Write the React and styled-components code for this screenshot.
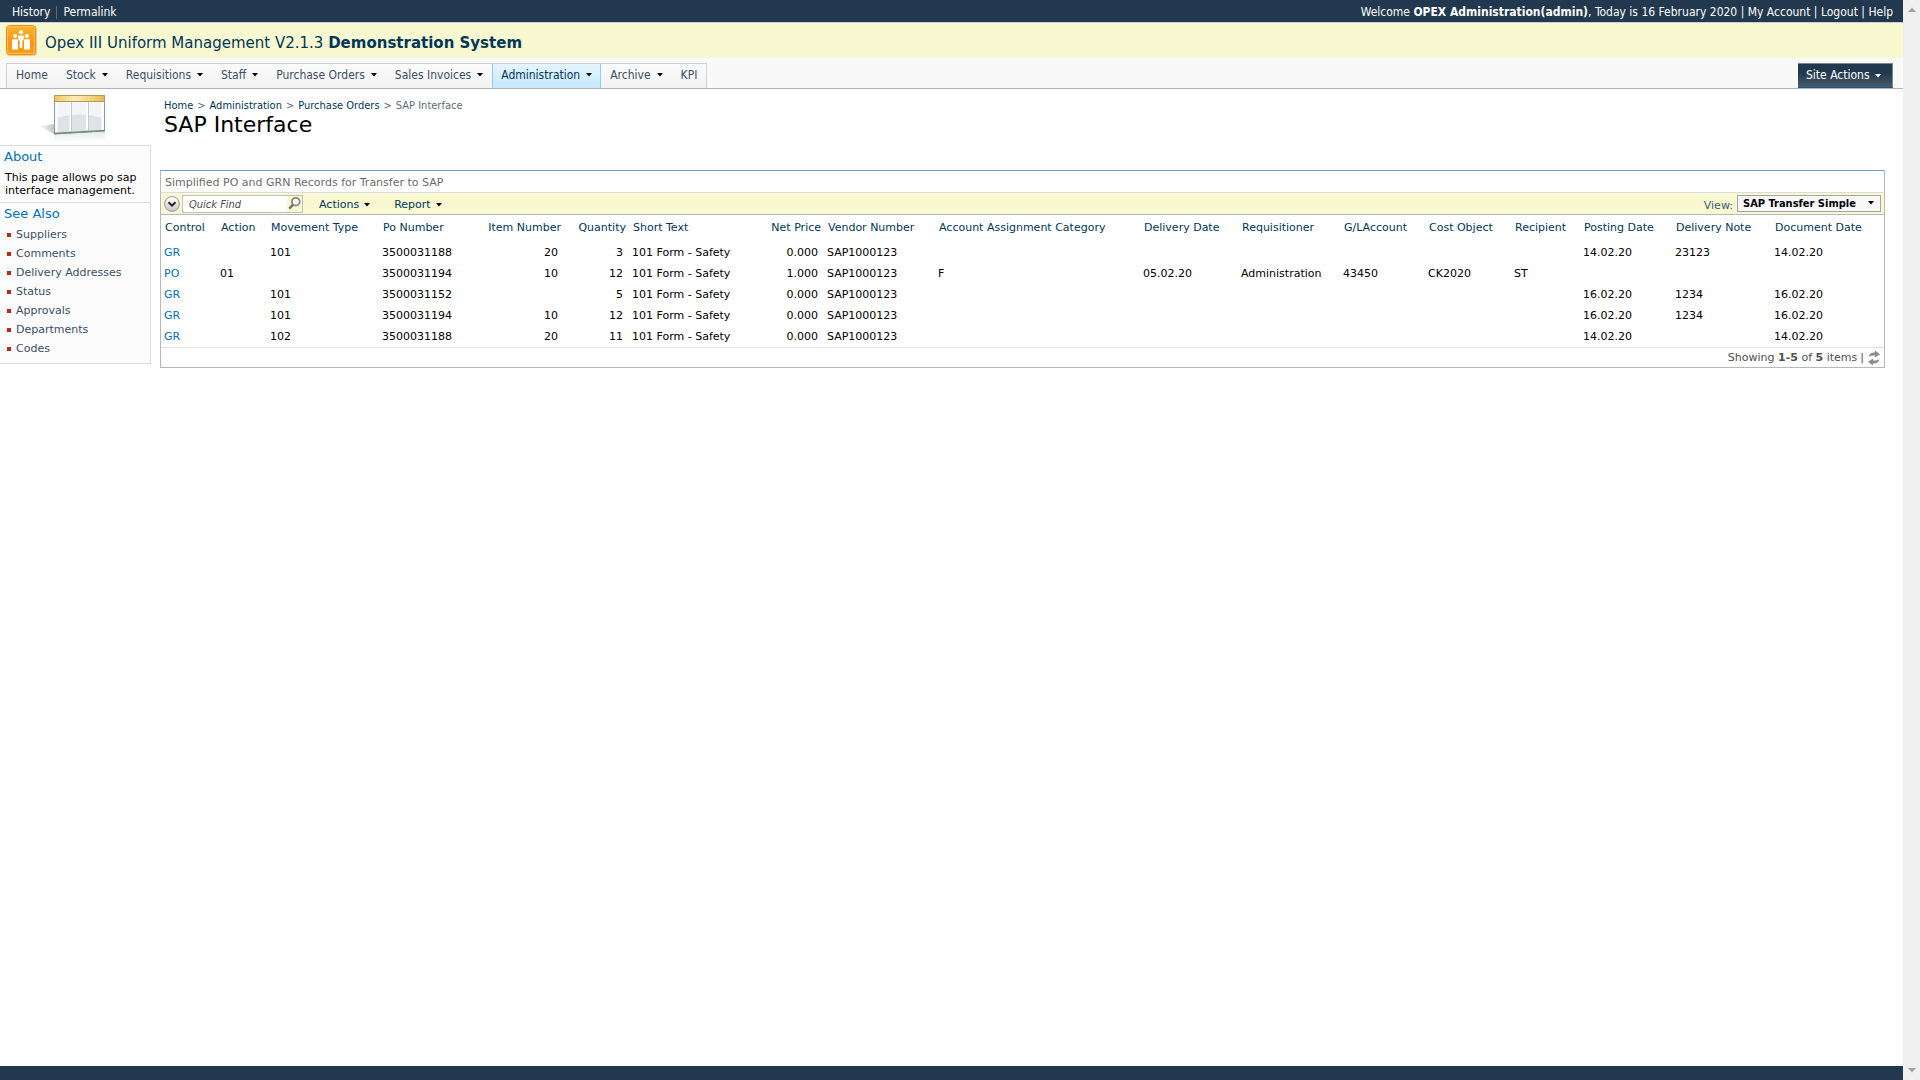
import React from 'react'
import styled, { createGlobalStyle, css } from 'styled-components';

const verdana = `Verdana, "DejaVu Sans", sans-serif`
const tahoma = `Tahoma, "DejaVu Sans Condensed", "DejaVu Sans", sans-serif`

const GlobalStyle = createGlobalStyle`
* {
  box-sizing: border-box;
}
body {
  margin: 0;
  background: #fff;
  color: #000;
  font-family: ${verdana};
  font-size: 11px;
  line-height: 13px;
}
a {
  color: inherit;
  text-decoration: none;
}
button, input, select {
  font: inherit;
  color: inherit;
}
`

const Shell = styled.div`
  display: flex;
  min-height: 100vh;
`

const Page = styled.div`
  flex: 1;
  min-width: 0;
  display: flex;
  flex-direction: column;
`

const ScrollTrack = styled.div`
  width: 17px;
  padding: 7px 0;
  display: flex;
  flex-direction: column;
  align-items: center;
  justify-content: space-between;
  background: #f0f0f0;
  color: #a3a3a3;
`

const TopBar = styled.header`
  height: 23px;
  padding: 2px 10px 0 12px;
  display: flex;
  align-items: center;
  justify-content: space-between;
  background: #22384e;
  border-bottom: 1px solid #c3d0dc;
  color: #fff;
  font-family: ${tahoma};
  font-size: 12px;
  white-space: nowrap;
`

const TopLinks = styled.nav`
  display: flex;
  gap: 6px;
`

const Divider = styled.span`
  width: 1px;
  background: #59697a;
`

const Banner = styled.div`
  height: 35px;
  padding-left: 6px;
  display: flex;
  align-items: center;
  gap: 8px;
  background: #f9f9d1;
`

const SiteTitle = styled.div`
  padding-top: 4px;
  color: #003759;
  font-size: 15px;
  line-height: 20px;
  white-space: nowrap;
`

const MenuBar = styled.div`
  height: 31px;
  padding: 5px 10px 0 6px;
  display: flex;
  justify-content: space-between;
  background: #f9f9f9;
  border-bottom: 1px solid #b5b5b5;
  font-family: ${tahoma};
  font-size: 12px;
`

const Tabs = styled.nav`
  display: flex;
  border: 1px solid #d0d0d0;
  border-bottom: 0;
  background: linear-gradient(#fbfbfb, #f2f2f2);
`

const tabStyle = css`
  display: flex;
  align-items: center;
  gap: 6px;
  padding: 0 8px 2px;
  border: solid transparent;
  border-width: 0 1px;
  background: none;
  color: #3b4f65;
  white-space: nowrap;

  svg {
    color: #000;
  }
`

const TabLink = styled.a`
  ${tabStyle}
`

const TabButton = styled.button`
  ${tabStyle}
  ${({ $active }) => $active && css`
    border-color: #91cdf2;
    background: linear-gradient(#e6f5ff, #c5e8ff);
    color: #003759;
  `}
`

const SiteActions = styled.button`
  width: 95px;
  display: flex;
  align-items: center;
  gap: 5px;
  padding: 0 0 0 8px;
  border: 1px solid #7b8792;
  border-bottom-color: #0f5a96;
  border-left: 0;
  background: linear-gradient(#22384e 40%, #4b5b6b);
  color: #fff;
  white-space: nowrap;
`

const Body = styled.div`
  flex: 1;
  display: flex;
  align-items: flex-start;
`

const Sidebar = styled.aside`
  width: 151px;
`

const PageIcon = styled.svg`
  display: block;
  margin: 4px 0 2px 38px;
`

const SidePanel = styled.div`
  border: 1px solid #dbddde;
  border-left: 0;
  background: #fcfcfc;
`

const SideBox = styled.section`
  padding: 3px 4px 5px;

  & + & {
    border-top: 1px solid #dbddde;
  }
`

const SideTitle = styled.h2`
  margin: 0;
  color: #0072bc;
  font-size: 13px;
  font-weight: normal;
  line-height: 16px;
`

const SideText = styled.p`
  margin: 6px 0 0 1px;
  white-space: nowrap;
`

const SideList = styled.ul`
  margin: 3px 0 0;
  padding: 0;
  list-style: none;
`

const SideItem = styled.li`
  display: flex;
  align-items: center;
  gap: 5px;
  height: 19px;
  padding-left: 3px;
  color: #3b4f65;

  &::before {
    content: '';
    width: 4px;
    height: 4px;
    background: #c4260d;
  }
`

const Main = styled.main`
  flex: 1;
  min-width: 0;
  padding: 10px 18px 0 9px;
`

const Crumbs = styled.nav`
  display: flex;
  gap: 4px;
  padding-left: 4px;
  color: #003759;
  font-family: ${tahoma};
`

const Muted = styled.span`
  color: #5f6b78;
`

const Heading = styled.h1`
  margin: 0 0 32px;
  padding-left: 4px;
  font-size: 22px;
  font-weight: normal;
  line-height: 26px;
`

const Grid = styled.section`
  border: 1px solid #b6b8bb;
  border-top-color: #6c9cdb;
`

const GridTitle = styled.div`
  padding: 5px 4px 3px;
  color: #6b6b6b;
`

const Toolbar = styled.div`
  height: 23px;
  padding: 0 3px;
  display: flex;
  align-items: center;
  border: solid;
  border-width: 1px 0;
  border-color: #dcdcdc transparent #b6b8bb;
  background: #f9f9d1;
  color: #003759;
`

const RoundButton = styled.button`
  display: flex;
  padding: 0;
  border: 0;
  background: none;
`

const SearchBox = styled.form`
  width: 121px;
  height: 18px;
  margin: 0 8px 0 2px;
  display: flex;
  border: 1px solid #bfc1c4;
  background: #fff;
`

const SearchInput = styled.input`
  flex: 1;
  min-width: 0;
  padding: 1px 6px 0;
  border: 0;
  outline: 0;
  background: none;
  font-family: ${tahoma};
  font-style: italic;

  &::placeholder {
    color: #4a4a4a;
    opacity: 1;
  }
`

const SearchButton = styled.button`
  display: flex;
  padding: 0 1px;
  border: 0;
  background: #f9f9d1;
`

const ToolButton = styled.button`
  display: flex;
  align-items: center;
  gap: 5px;
  margin-right: 8px;
  padding: 2px 8px 0;
  border: 0;
  background: none;

  svg {
    color: #000;
  }
`

const ViewPicker = styled.label`
  margin-left: auto;
  display: flex;
  align-items: flex-end;
  gap: 4px;
  color: #3b5a7c;
`

const SelectWrap = styled.span`
  position: relative;
  display: flex;
  color: #000;

  svg {
    position: absolute;
    right: 7px;
    top: 6px;
    pointer-events: none;
  }
`

const Select = styled.select`
  appearance: none;
  width: 144px;
  height: 17px;
  padding: 0 16px 0 5px;
  border: 1px solid #a5a7aa;
  border-radius: 0;
  background: #f8f8f8;
  font-family: ${tahoma};
  font-weight: bold;
`

const Table = styled.table`
  width: 100%;
  table-layout: fixed;
  border-collapse: collapse;
  white-space: nowrap;
`

const Th = styled.th`
  height: 27px;
  padding: 0 ${({ $right }) => ($right ? 3 : 4)}px 2px;
  color: #003759;
  font-weight: normal;
  text-align: ${({ $right }) => ($right ? 'right' : 'left')};
`

const Td = styled.td`
  height: 21px;
  padding: 0 ${({ $right }) => ($right ? 6 : 3)}px;
  text-align: ${({ $right }) => ($right ? 'right' : 'left')};

  a {
    color: #0072bc;
  }
`

const Pager = styled.div`
  height: 20px;
  padding-right: 3px;
  display: flex;
  align-items: center;
  justify-content: flex-end;
  gap: 3px;
  border-top: 1px solid #e3e3e3;
  color: #4f4f4f;
`

const Footer = styled.footer`
  height: 14px;
  background: #22384e;
`

const Caret = () => (
  <svg width="6" height="4" viewBox="0 0 6 4" aria-hidden="true">
    <path d="M0 0h6L3 3.6z" fill="currentColor" />
  </svg>
)

const ScrollArrow = ({ down }) => (
  <svg width="8" height="5" viewBox="0 0 8 5" aria-hidden="true">
    <path d={down ? 'M0 0h8L4 4.6z' : 'M0 5h8L4 .4z'} fill="currentColor" />
  </svg>
)

const Logo = () => (
  <svg width="31" height="31" viewBox="0 0 31 31" aria-hidden="true">
    <defs>
      <linearGradient id="logo" x1="0" y1="0" x2="0" y2="1">
        <stop offset="0" stopColor="#ffb52e" />
        <stop offset=".6" stopColor="#fb9410" />
        <stop offset="1" stopColor="#fba01c" />
      </linearGradient>
    </defs>
    <rect x="1" y="1" width="30" height="30" rx="3" fill="#d9d2b0" />
    <rect x=".5" y=".5" width="29" height="29" rx="3" fill="url(#logo)" stroke="#f08a10" />
    <rect x="1.5" y="1.5" width="27" height="27" rx="2" fill="none" stroke="#ffc35a" />
    <g fill="#fff">
      <circle cx="15" cy="7.2" r="2.1" />
      <circle cx="9.200" cy="11" r="2.1" />
      <circle cx="20.800" cy="11" r="2.1" />
      <path d="M12.2 10.4h5.6v4.2l-1.400 1.400-.2 7h-2.400l-.2-7-1.400-1.400z" />
      <path d="M6 15.2q0-1 1-1h4q1 0 1 1v9.4H6zM18 15.2q0-1 1-1h4q1 0 1 1v9.4h-6z" />
    </g>
  </svg>
)

const SheetIcon = () => (
  <PageIcon width="70" height="50" viewBox="0 0 70 50" aria-hidden="true">
    <defs>
      <linearGradient id="gold" x1="0" y1="0" x2="1" y2="0">
        <stop offset="0" stopColor="#efc55e" />
        <stop offset=".4" stopColor="#fdeeb9" />
        <stop offset="1" stopColor="#e9bc52" />
      </linearGradient>
      <linearGradient id="shade" x1="0" y1="0" x2="1" y2="0">
        <stop offset="0" stopColor="#fff" />
        <stop offset="1" stopColor="#c4c4c4" />
      </linearGradient>
      <linearGradient id="fade" x1="0" y1="0" x2="0" y2="1">
        <stop offset="0" stopColor="#c9d2cf" />
        <stop offset="1" stopColor="#fff" />
      </linearGradient>
    </defs>
    <path d="M1 33l15-2v10z" fill="url(#shade)" />
    <path d="M16 41l51-3v9l-51 2z" fill="url(#fade)" opacity=".5" />
    <path d="M16.500 2.500h50v35.500l-50 3z" fill="#f5f5f7" stroke="#889f97" />
    <path d="M18 25q24-7 47 0v12l-47 3z" fill="#e0e2e7" />
    <path d="M18.500 9v30M32.500 9v29M49 9v28M64.500 9v28" stroke="#fff" strokeWidth="2" />
    <path d="M33.500 9v30M50.500 9v29" stroke="#c4cbca" />
    <path d="M16.500 2.500h50v6h-50z" fill="url(#gold)" stroke="#b59a55" />
    <path d="M16 40.500l51-3" stroke="#6d8c82" strokeWidth="1.400" />
  </PageIcon>
)

const ExpandIcon = () => (
  <svg width="16" height="16" viewBox="0 0 16 16" aria-hidden="true">
    <defs>
      <linearGradient id="round" x1="0" y1="0" x2="0" y2="1">
        <stop offset="0" stopColor="#fff" />
        <stop offset="1" stopColor="#c6c6c6" />
      </linearGradient>
    </defs>
    <circle cx="8" cy="8" r="7.400" fill="url(#round)" stroke="#999" />
    <path d="M4.500 6.200L8 9.700l3.500-3.500" fill="none" stroke="#222" strokeWidth="2" />
  </svg>
)

const SearchIcon = () => (
  <svg width="13" height="15" viewBox="0 0 13 15" aria-hidden="true">
    <circle cx="7.800" cy="5.700" r="3.900" fill="#fff" stroke="#858585" strokeWidth="1.800" />
    <path d="M5 8.700L1.300 12.600" stroke="#757575" strokeWidth="2.600" />
  </svg>
)

const RefreshIcon = () => (
  <svg width="14" height="16" viewBox="0 0 14 16" aria-hidden="true">
    <g fill="#8b8b8b">
      <path d="M1.500 6.800Q2.500 2.400 8 2.600V.400l5 3.800-5 3.400V5.500Q4.200 5 1.500 6.800z" />
      <path d="M12.500 9.200Q11.500 13.600 6 13.400v2.200l-5-3.800 5-3.400v2.100q3.800.500 6.500-1.300z" />
    </g>
  </svg>
)

const tabs = [
  { name: 'Home' },
  { name: 'Stock', menu: true },
  { name: 'Requisitions', menu: true },
  { name: 'Staff', menu: true },
  { name: 'Purchase Orders', menu: true },
  { name: 'Sales Invoices', menu: true },
  { name: 'Administration', menu: true, active: true },
  { name: 'Archive', menu: true },
  { name: 'KPI' },
]

const seeAlso = ['Suppliers', 'Comments', 'Delivery Addresses', 'Status', 'Approvals', 'Departments', 'Codes']

const columns = [
  { key: 'control', label: 'Control', width: 56 },
  { key: 'action', label: 'Action', width: 50 },
  { key: 'movement', label: 'Movement Type', width: 112 },
  { key: 'po', label: 'Po Number', width: 100 },
  { key: 'item', label: 'Item Number', width: 85, right: true },
  { key: 'quantity', label: 'Quantity', width: 65, right: true },
  { key: 'text', label: 'Short Text', width: 130 },
  { key: 'price', label: 'Net Price', width: 65, right: true },
  { key: 'vendor', label: 'Vendor Number', width: 111 },
  { key: 'category', label: 'Account Assignment Category', width: 205 },
  { key: 'delivery', label: 'Delivery Date', width: 98 },
  { key: 'requisitioner', label: 'Requisitioner', width: 102 },
  { key: 'gl', label: 'G/LAccount', width: 85 },
  { key: 'cost', label: 'Cost Object', width: 86 },
  { key: 'recipient', label: 'Recipient', width: 69 },
  { key: 'posting', label: 'Posting Date', width: 92 },
  { key: 'note', label: 'Delivery Note', width: 99 },
  { key: 'document', label: 'Document Date' },
]

const base = { text: '101 Form - Safety', price: '0.000', vendor: 'SAP1000123' }

const records = [
  { ...base, control: 'GR', movement: '101', po: '3500031188', item: '20', quantity: '3', posting: '14.02.20', note: '23123', document: '14.02.20' },
  { ...base, control: 'PO', action: '01', po: '3500031194', item: '10', quantity: '12', price: '1.000', category: 'F', delivery: '05.02.20', requisitioner: 'Administration', gl: '43450', cost: 'CK2020', recipient: 'ST' },
  { ...base, control: 'GR', movement: '101', po: '3500031152', quantity: '5', posting: '16.02.20', note: '1234', document: '16.02.20' },
  { ...base, control: 'GR', movement: '101', po: '3500031194', item: '10', quantity: '12', posting: '16.02.20', note: '1234', document: '16.02.20' },
  { ...base, control: 'GR', movement: '102', po: '3500031188', item: '20', quantity: '11', posting: '14.02.20', document: '14.02.20' },
]

function RecordsTable () {
  return (
    <Table>
      <colgroup>
        {columns.map((c) => <col key={c.key} width={c.width} />)}
      </colgroup>
      <thead>
        <tr>
          {columns.map((c) => <Th key={c.key} scope="col" $right={c.right}>{c.label}</Th>)}
        </tr>
      </thead>
      <tbody>
        {records.map((row, i) => (
          <tr key={i}>
            {columns.map((c) => (
              <Td key={c.key} $right={c.right}>
                {c.key === 'control' ? <a href="#record">{row.control}</a> : row[c.key]}
              </Td>
            ))}
          </tr>
        ))}
      </tbody>
    </Table>
  )
}

function App () {
  return (
    <Shell>
      <GlobalStyle />
      <Page>
        <TopBar>
          <TopLinks>
            <a href="#history">History</a>
            <Divider />
            <a href="#permalink">Permalink</a>
          </TopLinks>
          <div>
            Welcome <b>OPEX Administration(admin)</b>, Today is 16 February 2020 | <a href="#account">My Account</a> | <a href="#logout">Logout</a> | <a href="#help">Help</a>
          </div>
        </TopBar>
        <Banner>
          <Logo />
          <SiteTitle>Opex III Uniform Management V2.1.3 <b>Demonstration System</b></SiteTitle>
        </Banner>
        <MenuBar>
          <Tabs>
            {tabs.map((t) => t.menu
              ? <TabButton key={t.name} type="button" $active={t.active}>{t.name}<Caret /></TabButton>
              : <TabLink key={t.name} href="#tab">{t.name}</TabLink>
            )}
          </Tabs>
          <SiteActions type="button">Site Actions<Caret /></SiteActions>
        </MenuBar>
        <Body>
          <Sidebar>
            <SheetIcon />
            <SidePanel>
              <SideBox>
                <SideTitle>About</SideTitle>
                <SideText>This page allows po sap<br />interface management.</SideText>
              </SideBox>
              <SideBox>
                <SideTitle>See Also</SideTitle>
                <SideList>
                  {seeAlso.map((name) => <SideItem key={name}><a href="#see">{name}</a></SideItem>)}
                </SideList>
              </SideBox>
            </SidePanel>
          </Sidebar>
          <Main>
            <Crumbs>
              <a href="#home">Home</a>
              <Muted>&gt;</Muted>
              <a href="#administration">Administration</a>
              <Muted>&gt;</Muted>
              <a href="#orders">Purchase Orders</a>
              <Muted>&gt;</Muted>
              <Muted>SAP Interface</Muted>
            </Crumbs>
            <Heading>SAP Interface</Heading>
            <Grid>
              <GridTitle>Simplified PO and GRN Records for Transfer to SAP</GridTitle>
              <Toolbar>
                <RoundButton type="button" aria-label="Search options"><ExpandIcon /></RoundButton>
                <SearchBox>
                  <SearchInput type="text" placeholder="Quick Find" aria-label="Quick Find" />
                  <SearchButton type="button" aria-label="Search"><SearchIcon /></SearchButton>
                </SearchBox>
                <ToolButton type="button">Actions<Caret /></ToolButton>
                <ToolButton type="button">Report<Caret /></ToolButton>
                <ViewPicker>
                  View:
                  <SelectWrap>
                    <Select defaultValue="simple">
                      <option value="simple">SAP Transfer Simple</option>
                    </Select>
                    <Caret />
                  </SelectWrap>
                </ViewPicker>
              </Toolbar>
              <RecordsTable />
              <Pager>
                <span>Showing <b>1-5</b> of <b>5</b> items</span>
                <span>|</span>
                <RoundButton type="button" aria-label="Refresh"><RefreshIcon /></RoundButton>
              </Pager>
            </Grid>
          </Main>
        </Body>
        <Footer />
      </Page>
      <ScrollTrack aria-hidden="true">
        <ScrollArrow />
        <ScrollArrow down />
      </ScrollTrack>
    </Shell>
  )
}

export default App;
